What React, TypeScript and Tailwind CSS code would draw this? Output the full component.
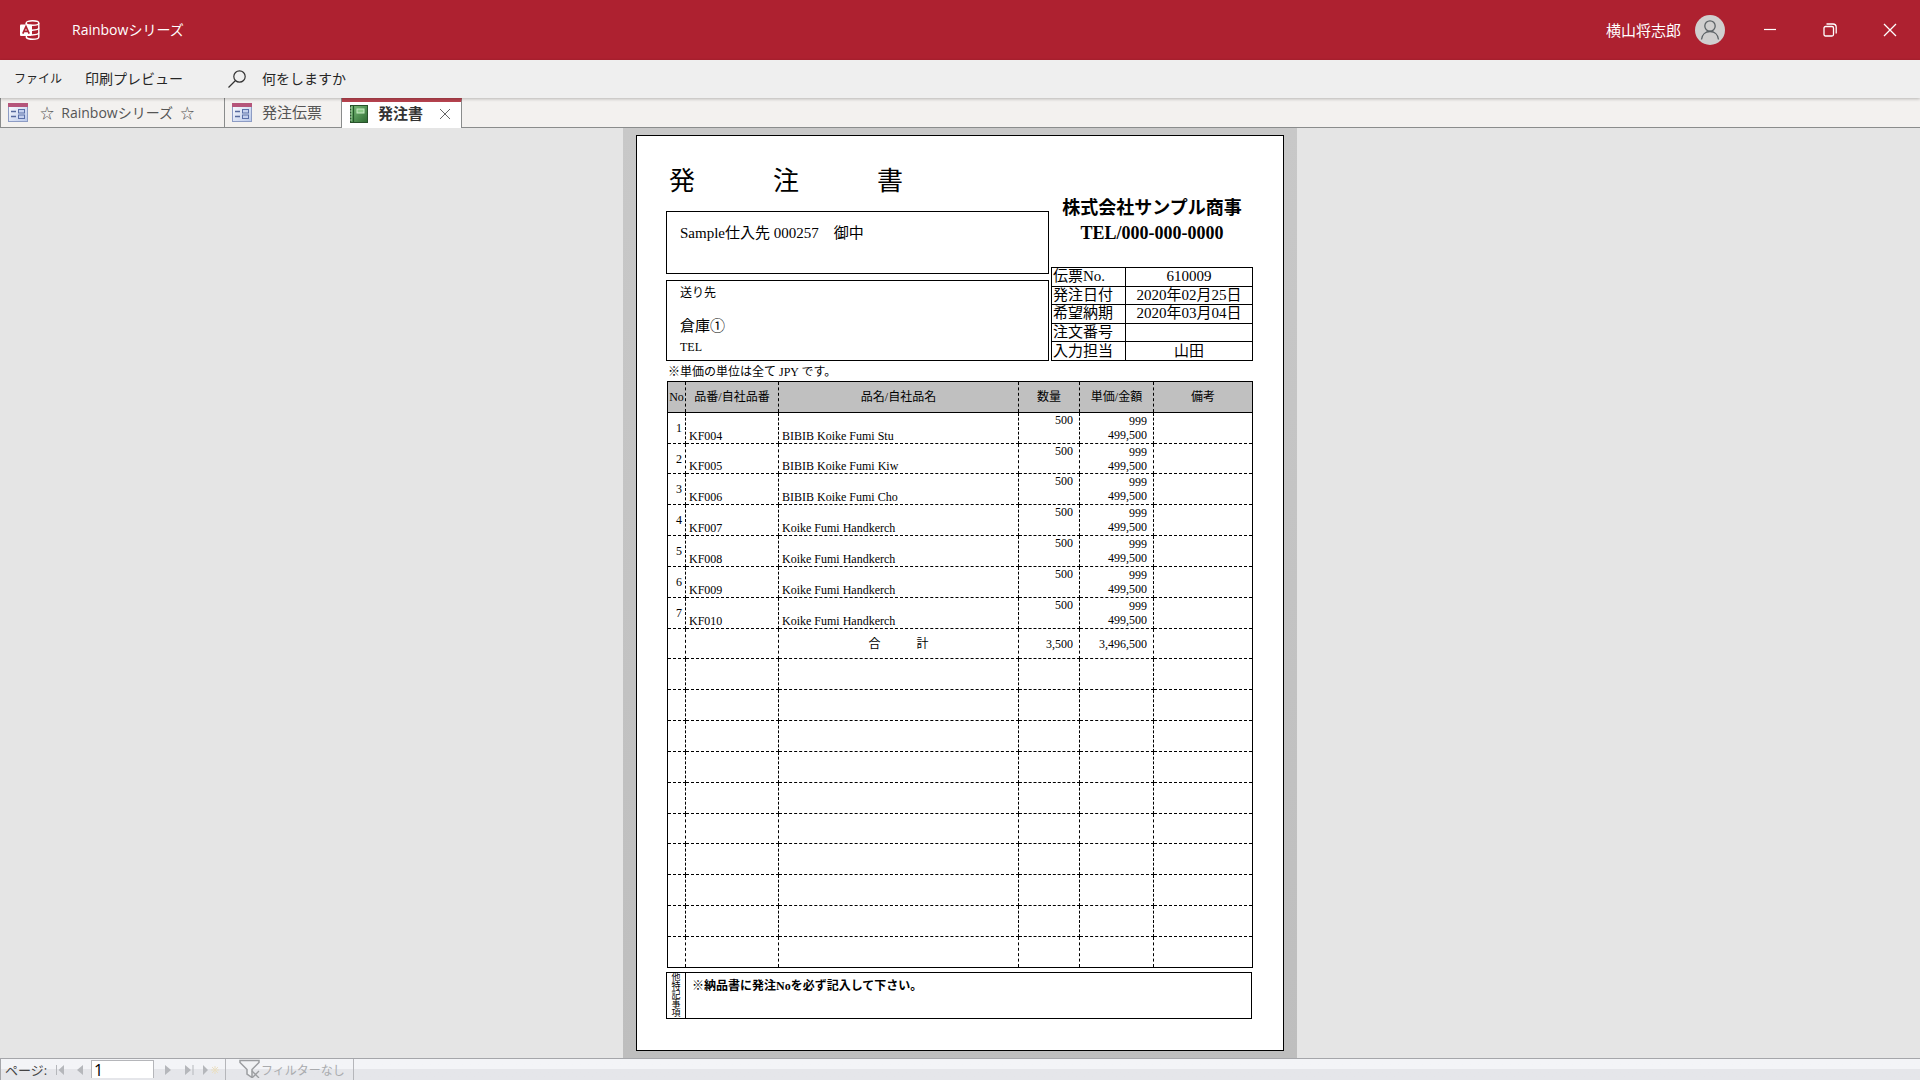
import React from "react";

const items = [
  { no: 1, code: "KF004", name: "BIBIB Koike Fumi Stu" },
  { no: 2, code: "KF005", name: "BIBIB Koike Fumi Kiw" },
  { no: 3, code: "KF006", name: "BIBIB Koike Fumi Cho" },
  { no: 4, code: "KF007", name: "Koike Fumi Handkerch" },
  { no: 5, code: "KF008", name: "Koike Fumi Handkerch" },
  { no: 6, code: "KF009", name: "Koike Fumi Handkerch" },
  { no: 7, code: "KF010", name: "Koike Fumi Handkerch" },
];

const slipInfo = [
  ["伝票No.", "610009"],
  ["発注日付", "2020年02月25日"],
  ["希望納期", "2020年03月04日"],
  ["注文番号", ""],
  ["入力担当", "山田"],
];

const emptyRows = Array.from({ length: 10 }, (_, i) => i);

const cell = "border border-dashed border-black p-0";

function AccessLogo() {
  return (
    <svg width="20" height="20" viewBox="0 0 20 20" fill="none" aria-hidden="true">
      <g stroke="#fff" strokeWidth="1.4">
        <ellipse cx="12.5" cy="3" rx="6.3" ry="2.2" />
        <path d="M6.2 3v2M18.8 3v14c0 1.300-2.800 2.200-6.300 2.200-3 0-5.400-.7-6.100-1.700v-1.500" />
        <path d="M12 10.200c4-.1 6.800-1 6.800-2.400M12 15c4-.1 6.800-1 6.800-2.400" />
      </g>
      <rect x="0" y="4.500" width="12" height="11.500" rx="1" fill="#fff" />
      <path d="M2.800 13.700 6 6.500l3.200 7.200M4 11.300h4" stroke="#ae2130" strokeWidth="1.700" />
    </svg>
  );
}

function FormIcon() {
  return (
    <svg width="20" height="19" viewBox="0 0 20 19" aria-hidden="true">
      <defs>
        <linearGradient id="form" x1="0" y1="0" x2="1" y2="1">
          <stop offset="0" stopColor="#ffffff" />
          <stop offset="1" stopColor="#b9c8ea" />
        </linearGradient>
      </defs>
      <rect x=".5" y=".5" width="19" height="18" fill="url(#form)" stroke="#8d9cc4" />
      <rect x="0" y="0" width="20" height="4" fill="#b5557a" />
      <path d="M3 8.500h5M3 13.500h5" stroke="#56699d" strokeWidth="1.500" />
      <rect x="10.500" y="6.500" width="6" height="3.500" fill="#c4d0ee" stroke="#5b70a8" />
      <rect x="10.500" y="12" width="6" height="3.500" fill="#c4d0ee" stroke="#5b70a8" />
    </svg>
  );
}

function ReportIcon() {
  return (
    <svg width="18" height="18" viewBox="0 0 18 18" aria-hidden="true">
      <defs>
        <linearGradient id="book" x1="0" y1="0" x2="1" y2="1">
          <stop offset="0" stopColor="#7fc07c" />
          <stop offset="1" stopColor="#2c6a31" />
        </linearGradient>
      </defs>
      <rect x=".5" y=".5" width="17" height="17" fill="url(#book)" stroke="#28512b" />
      <path d="M3.500 1v16" stroke="#24582a" strokeWidth="1.200" />
      <path d="M0 3h2M0 6h2M0 9h2M0 12h2M0 15h2" stroke="#a9cba8" />
      <rect x="7" y="4" width="7" height="4" fill="#8ccb88" stroke="#c9ecc6" />
    </svg>
  );
}

function TitleBar() {
  return (
    <header className="flex h-[60px] shrink-0 items-center bg-[#ae2130] pl-5 text-white">
      <AccessLogo />
      <h1 className="ml-8 text-sm">Rainbowシリーズ</h1>
      <span className="ml-auto text-[15px]">横山将志郎</span>
      <span className="ml-3.5 flex h-[30px] w-[30px] items-center justify-center rounded-full bg-[#d0cfcf]">
        <svg width="20" height="20" viewBox="0 0 20 20" fill="none" stroke="#5c6266" strokeWidth="1.300" aria-hidden="true">
          <circle cx="10" cy="6" r="5.200" />
          <path d="M1.500 19.500C2 14.500 5.500 11.500 10 11.500s8 3 8.500 8" />
        </svg>
      </span>
      <div className="ml-[15px] flex">
        <button aria-label="最小化" className="flex h-[60px] w-[60px] items-center justify-center">
          <svg width="14" height="14" viewBox="0 0 14 14" stroke="#fff" strokeWidth="1.200" aria-hidden="true">
            <path d="M1 6.500h12" />
          </svg>
        </button>
        <button aria-label="元に戻す" className="flex h-[60px] w-[60px] items-center justify-center">
          <svg width="14" height="14" viewBox="0 0 14 14" fill="none" stroke="#fff" strokeWidth="1.300" aria-hidden="true">
            <rect x="1" y="3.500" width="9.500" height="9.500" rx="1.500" />
            <path d="M3.500 1h6.500a3.200 3.200 0 0 1 3.200 3.200v6.300" />
          </svg>
        </button>
        <button aria-label="閉じる" className="flex h-[60px] w-[60px] items-center justify-center">
          <svg width="14" height="14" viewBox="0 0 14 14" stroke="#fff" strokeWidth="1.300" aria-hidden="true">
            <path d="m1 1 12 12M13 1 1 13" />
          </svg>
        </button>
      </div>
    </header>
  );
}

function MenuBar() {
  return (
    <nav className="relative flex h-[38px] shrink-0 items-center bg-[#efefef] text-sm text-[#262626] shadow-[0_1px_3px_rgba(0,0,0,0.25)]">
      <button className="ml-3 w-[52px] text-center text-xs">ファイル</button>
      <button className="ml-[21px]">印刷プレビュー</button>
      <label htmlFor="tell-me" className="ml-[45px]">
        <svg width="18" height="18" viewBox="0 0 18 18" fill="none" stroke="#333" strokeWidth="1.200" aria-hidden="true">
          <circle cx="11.500" cy="6.500" r="5.700" />
          <path d="M7.500 10.500.5 17.500" />
        </svg>
      </label>
      <input
        id="tell-me"
        aria-label="何をしますか"
        placeholder="何をしますか"
        className="ml-4 w-40 bg-transparent outline-none placeholder:text-[#262626]"
      />
    </nav>
  );
}

function TabStrip() {
  return (
    <div className="flex h-[30px] shrink-0 border-b border-[#8a8c8c] bg-[#f3f1ef] text-sm text-[#555]">
      <button className="flex w-[225px] items-center border-r border-l border-[#8a8c8c] pl-[7px]">
        <FormIcon />
        <span className="ml-3 whitespace-pre">☆  Rainbowシリーズ  ☆</span>
      </button>
      <button className="flex w-[117px] items-center border-r border-[#8a8c8c] pl-[7px]">
        <FormIcon />
        <span className="ml-2.5 text-[15px]">発注伝票</span>
      </button>
      <div className="-mb-px flex w-[120px] items-center border-t-4 border-r border-t-[#b8434f] border-r-[#8a8c8c] bg-white pb-0.5 pl-2">
        <ReportIcon />
        <button className="ml-2.5 text-[15px] font-bold text-[#333]">発注書</button>
        <button aria-label="発注書を閉じる" className="ml-4">
          <svg width="12" height="12" viewBox="0 0 12 12" stroke="#666" aria-hidden="true">
            <path d="m1 1 10 10M11 1 1 11" />
          </svg>
        </button>
      </div>
    </div>
  );
}

function OrderTable() {
  return (
    <table className="mt-px ml-px h-[587px] w-[586px] table-fixed border-collapse border border-black text-xs leading-[14px]">
      <colgroup>
        <col className="w-[18px]" />
        <col className="w-[93px]" />
        <col className="w-[240px]" />
        <col className="w-[61px]" />
        <col className="w-[74px]" />
        <col />
      </colgroup>
      <tbody>
        <tr className="h-[30px] border-b border-black bg-[#c0c0c0]">
          {["No", "品番/自社品番", "品名/自社品名", "数量", "単価/金額", "備考"].map((h) => (
            <th key={h} scope="col" className="border-x border-dashed border-black p-0 font-normal whitespace-nowrap">
              {h}
            </th>
          ))}
        </tr>
        {items.map((item) => (
          <tr key={item.no} className="h-[30px]">
            <td className={cell + " pr-[3px] text-right"}>{item.no}</td>
            <td className={cell + " pl-[3px] align-bottom"}>{item.code}</td>
            <td className={cell + " pl-[3px] align-bottom"}>{item.name}</td>
            <td className={cell + " pr-1.5 text-right align-top"}>500</td>
            <td className={cell + " pr-1.5 text-right"}>
              999
              <br />
              499,500
            </td>
            <td className={cell}></td>
          </tr>
        ))}
        <tr className="h-[30px]">
          <td className={cell}></td>
          <td className={cell}></td>
          <td className={cell + " text-center"}>合　　　計</td>
          <td className={cell + " pr-1.5 text-right"}>3,500</td>
          <td className={cell + " pr-1.5 text-right"}>3,496,500</td>
          <td className={cell}></td>
        </tr>
        {emptyRows.map((row) => (
          <tr key={row} className="h-[30px]">
            <td className={cell}></td>
            <td className={cell}></td>
            <td className={cell}></td>
            <td className={cell}></td>
            <td className={cell}></td>
            <td className={cell}></td>
          </tr>
        ))}
      </tbody>
    </table>
  );
}

function Report() {
  return (
    <article className="w-[648px] border border-black bg-white px-[29px] pb-[31px] font-['Liberation_Serif','Noto_Sans_CJK_JP',serif] text-black">
      <div className="flex gap-0.5 pt-8">
        <div className="w-[383px]">
          <h2 className="h-[43px] pl-[3px] text-[26px] leading-7">発　　　注　　　書</h2>
          <div className="h-[63px] border border-black px-[13px] py-[11px] text-[15px] leading-5">
            Sample仕入先 000257　御中
          </div>
          <div className="mt-1.5 h-[81px] border border-black px-[13px] pt-1">
            <p className="text-xs leading-4">送り先</p>
            <p className="mt-[15px] text-[15px] leading-5">倉庫①</p>
            <p className="mt-[3px] text-xs leading-4">TEL</p>
          </div>
        </div>
        <div className="flex w-[202px] flex-col">
          <div className="pt-7 text-center text-lg leading-[25px] font-bold whitespace-nowrap">
            <p>株式会社サンプル商事</p>
            <p>TEL/000-000-0000</p>
          </div>
          <table className="mt-auto h-[94px] w-full table-fixed border-collapse text-[15px] leading-[17px]">
            <tbody>
              {slipInfo.map(([label, value]) => (
                <tr key={label}>
                  <th scope="row" className="w-[74px] border border-black p-0 pl-px text-left font-normal">
                    {label}
                  </th>
                  <td className="border border-black p-0 text-center">{value}</td>
                </tr>
              ))}
            </tbody>
          </table>
        </div>
      </div>
      <p className="mt-0.5 h-[17px] pl-0.5 text-xs leading-[18px]">※単価の単位は全て JPY です。</p>
      <OrderTable />
      <div className="mt-1 flex h-[47px] w-[586px] border border-black">
        <div className="flex w-[19px] flex-col items-center justify-center border-r border-black text-[9px] leading-[9px]">
          {["他", "特", "記", "事", "項"].map((c) => (
            <span key={c}>{c}</span>
          ))}
        </div>
        <p className="pt-[3px] pl-1.5 text-xs leading-5 font-bold">※納品書に発注Noを必ず記入して下さい。</p>
      </div>
    </article>
  );
}

function StatusBar() {
  return (
    <footer className="flex h-[22px] shrink-0 items-start overflow-hidden border-t border-l border-[#a5a6aa] bg-linear-to-b from-[#f3f4f7] from-50% to-[#e5e6ea] to-50% text-[13px] text-[#444]">
      <label htmlFor="page" className="ml-1 w-[46px] leading-[22px]">
        ページ:
      </label>
      <button aria-label="先頭のページ" className="ml-1 pt-1.5">
        <svg width="10" height="10" viewBox="0 0 10 10" fill="#b5b7bb" aria-hidden="true">
          <path d="M1 0h1v10H1zM9 0v10L3.500 5z" />
        </svg>
      </button>
      <button aria-label="前のページ" className="ml-3 pt-1.5">
        <svg width="6" height="10" viewBox="0 0 6 10" fill="#b5b7bb" aria-hidden="true">
          <path d="M6 0v10L0 5z" />
        </svg>
      </button>
      <input
        id="page"
        defaultValue="1"
        className="mt-px ml-2 h-[18px] w-[63px] border border-b-0 border-[#b5b6ba] bg-white pl-0.5 text-base leading-[22px] text-black outline-none"
      />
      <button aria-label="次のページ" className="ml-[11px] pt-1.5">
        <svg width="6" height="10" viewBox="0 0 6 10" fill="#b5b7bb" aria-hidden="true">
          <path d="M0 0v10l6-5z" />
        </svg>
      </button>
      <button aria-label="最後のページ" className="ml-3.5 pt-1.5">
        <svg width="10" height="10" viewBox="0 0 10 10" fill="#b5b7bb" aria-hidden="true">
          <path d="M0 0v10l6-5zM7.500 0h1v10h-1z" />
        </svg>
      </button>
      <button aria-label="新しいページ" className="ml-2 pt-1.5">
        <svg width="16" height="10" viewBox="0 0 16 10" aria-hidden="true">
          <path d="M0 0v10l5-5z" fill="#b5b7bb" />
          <path d="M12 1v8M8 5h8M9 2l6 6M15 2 9 8" stroke="#eadfc2" />
        </svg>
      </button>
      <div className="ml-1.5 flex h-full w-[129px] items-start border-x border-[#b5b6ba] pl-[13px] text-[#a9abae]">
        <svg width="22" height="19" viewBox="0 0 22 19" className="shrink-0" fill="none" stroke="#9b9da0" aria-hidden="true">
          <path d="M1 1.500h19v2l-7 7v8l-5-3.500v-4.500l-7-7z" strokeWidth="1.500" fill="#f1f2f4" />
          <path d="m13 12 7 7M20 12l-7 7" strokeWidth="1.300" />
        </svg>
        <span className="text-xs leading-[23px] whitespace-nowrap">フィルターなし</span>
      </div>
    </footer>
  );
}

export default function App() {
  return (
    <div className="flex h-screen flex-col overflow-hidden bg-[#e5e5e5] font-['Open_Sans','Noto_Sans_CJK_JP',sans-serif]">
      <TitleBar />
      <MenuBar />
      <TabStrip />
      <main className="flex min-h-0 flex-1 justify-center overflow-hidden">
        <div className="bg-linear-to-b from-[#c8c8c8] to-[#bebebe] px-[13px] pt-[7px]">
          <Report />
        </div>
      </main>
      <StatusBar />
    </div>
  );
}
